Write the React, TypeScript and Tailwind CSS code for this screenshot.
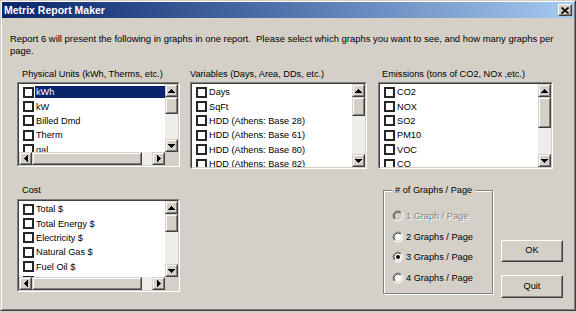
import React from "react";

const FONT = "font-['Liberation_Sans',Arial,sans-serif]";

function Raised({
  className = "",
  push = false,
  children,
}: {
  className?: string;
  push?: boolean;
  children?: React.ReactNode;
}) {
  const outer = push
    ? "border-t-white border-l-white border-r-[#404040] border-b-[#404040]"
    : "border-t-[#d4d0c8] border-l-[#d4d0c8] border-r-[#404040] border-b-[#404040]";
  const inner = push
    ? "border-t-[#d4d0c8] border-l-[#d4d0c8] border-r-[#808080] border-b-[#808080]"
    : "border-t-white border-l-white border-r-[#808080] border-b-[#808080]";
  return (
    <div className={`shrink-0 border ${outer} ${className}`}>
      <div className={`flex h-full w-full items-center justify-center border bg-[#d4d0c8] ${inner}`}>
        {children}
      </div>
    </div>
  );
}

const ARROWS: Record<string, { w: number; h: number; d: string }> = {
  up: { w: 7, h: 4, d: "M3 0h1v1h1v1h1v1h1v1H0V3h1V2h1V1h1z" },
  down: { w: 7, h: 4, d: "M0 0h7v1h-1v1h-1v1h-1v1H3V3H2V2H1V1H0z" },
  left: { w: 4, h: 7, d: "M0 3h1V2h1V1h1V0h1v7H3V6H2V5H1V4H0z" },
  right: { w: 4, h: 7, d: "M0 0h1v1h1v1h1v1h1v1H3v1H2v1H1v1H0z" },
};

function Arrow({ dir }: { dir: "up" | "down" | "left" | "right" }) {
  const a = ARROWS[dir];
  return (
    <svg width={a.w} height={a.h} viewBox={`0 0 ${a.w} ${a.h}`} shapeRendering="crispEdges">
      <path d={a.d} fill="#000" />
    </svg>
  );
}

function VScroll({ thumb }: { thumb: string }) {
  return (
    <div className="flex w-[13px] shrink-0 flex-col bg-[#eeede9]">
      <Raised className="h-[13px] w-[13px]">
        <Arrow dir="up" />
      </Raised>
      <Raised className={`w-[13px] ${thumb}`} />
      <div className="flex-1" />
      <Raised className="h-[13px] w-[13px]">
        <Arrow dir="down" />
      </Raised>
    </div>
  );
}

function HScroll({ thumb }: { thumb: string }) {
  return (
    <div className="flex h-[13px] flex-1 bg-[#eeede9]">
      <Raised className="h-[13px] w-[13px]">
        <Arrow dir="left" />
      </Raised>
      <Raised className={`h-[13px] ${thumb}`} />
      <div className="flex-1" />
      <Raised className="h-[13px] w-[13px]">
        <Arrow dir="right" />
      </Raised>
    </div>
  );
}

function ListBox({
  items,
  selected = -1,
  size,
  vThumb,
  hThumb,
}: {
  items: string[];
  selected?: number;
  size: string;
  vThumb: string;
  hThumb?: string;
}) {
  return (
    <div className={`border border-t-[#808080] border-l-[#808080] border-r-white border-b-white ${size}`}>
      <div className="flex h-full w-full flex-col border border-t-[#404040] border-l-[#404040] border-r-[#d4d0c8] border-b-[#d4d0c8] bg-white">
        <div className="flex min-h-0 flex-1">
          <div className="min-w-0 flex-1 overflow-hidden pt-[1px]">
            {items.map((t, i) => (
              <div key={t} className="flex h-[14.4px] items-center pl-[4px]">
                <span className="h-[11px] w-[11px] shrink-0 border-2 border-[#262626] bg-white" />
                <span
                  className={`ml-[1px] h-[12px] flex-1 whitespace-nowrap pl-[1px] leading-[12px] ${
                    i === selected ? "bg-[#0a246a] text-white" : "text-black"
                  }`}
                >
                  {t}
                </span>
              </div>
            ))}
          </div>
          <VScroll thumb={vThumb} />
        </div>
        {hThumb && (
          <div className="flex">
            <HScroll thumb={hThumb} />
            <div className="h-[13px] w-[13px] bg-[#d4d0c8]" />
          </div>
        )}
      </div>
    </div>
  );
}

function Radio({ checked = false, disabled = false }: { checked?: boolean; disabled?: boolean }) {
  return (
    <svg width="12" height="12" viewBox="0 0 12 12" className="shrink-0">
      <circle cx="6" cy="6" r="5" fill={disabled ? "#d4d0c8" : "#fff"} />
      <path d="M2.46 9.54 A5 5 0 0 1 9.54 2.46" fill="none" stroke="#808080" />
      <path d="M9.54 2.46 A5 5 0 0 1 2.46 9.54" fill="none" stroke="#fff" />
      <path d="M3.17 8.83 A4 4 0 0 1 8.83 3.17" fill="none" stroke="#404040" />
      <path d="M8.83 3.17 A4 4 0 0 1 3.17 8.83" fill="none" stroke="#d4d0c8" />
      {checked && <circle cx="6" cy="6" r="2" fill="#000" />}
    </svg>
  );
}

const radios = [
  { label: "1 Graph / Page", disabled: true },
  { label: "2 Graphs / Page" },
  { label: "3 Graphs / Page", checked: true },
  { label: "4 Graphs / Page" },
];

export default function App() {
  return (
    <div className={`h-[313px] w-[576px] bg-[#d4d0c8] text-[9.2px] text-black ${FONT}`}>
      <div className="h-[311px] border border-t-[#d4d0c8] border-l-[#d4d0c8] border-r-[#404040] border-b-[#404040]">
        <div className="flex h-full flex-col border border-t-white border-l-white border-r-[#808080] border-b-[#808080]">
          {/* title bar */}
          <div className="flex h-[16px] shrink-0 items-center bg-linear-to-r from-[#0a246a] to-[#a6caf0] pl-[2px] pr-[2px]">
            <span className="flex-1 text-[10.5px] font-bold leading-none text-white">Metrix Report Maker</span>
            <Raised push className="h-[12px] w-[14px]">
              <svg width="8" height="7" viewBox="0 0 8 7">
                <path d="M0.5 0.5 L7.5 6.5 M7.5 0.5 L0.5 6.5" stroke="#000" strokeWidth="1.6" />
              </svg>
            </Raised>
          </div>

          {/* body */}
          <div className="flex-1 pt-[15px]">
            <p className="whitespace-nowrap pl-[8px] text-[9.45px] leading-[12px]">
              Report 6 will present the following in graphs in one report.{"\u00a0 "}Please select which graphs you want to see, and how many graphs per
              <br />
              page.
            </p>

            <div className="mt-[11px] flex items-start">
              <div className="ml-[15px] w-[163px]">
                <div className="mb-[2px] pl-[5px] leading-[12px]">Physical Units (kWh, Therms, etc.)</div>
                <ListBox
                  items={["kWh", "kW", "Billed Dmd", "Therm", "gal"]}
                  selected={0}
                  size="h-[85px] w-[163px]"
                  vThumb="h-[17px]"
                  hThumb="w-[110px]"
                />
              </div>
              <div className="ml-[10px] w-[177px]">
                <div className="mb-[2px] leading-[12px]">Variables (Days, Area, DDs, etc.)</div>
                <ListBox
                  items={[
                    "Days",
                    "SqFt",
                    "HDD (Athens: Base 28)",
                    "HDD (Athens: Base 61)",
                    "HDD (Athens: Base 80)",
                    "HDD (Athens: Base 82)",
                  ]}
                  size="h-[87px] w-[177px]"
                  vThumb="h-[19px]"
                />
              </div>
              <div className="ml-[11px] w-[175px]">
                <div className="mb-[2px] pl-[4px] leading-[12px]">Emissions (tons of CO2, NOx ,etc.)</div>
                <ListBox
                  items={["CO2", "NOX", "SO2", "PM10", "VOC", "CO"]}
                  size="h-[87px] w-[175px]"
                  vThumb="h-[31px]"
                />
              </div>
            </div>

            <div className="mt-[15px] flex items-start">
              <div className="ml-[15px] w-[163px]">
                <div className="mb-[3px] pl-[5px] leading-[12px]">Cost</div>
                <ListBox
                  items={["Total $", "Total Energy $", "Electricity $", "Natural Gas $", "Fuel Oil $", "Propane $"]}
                  size="h-[93px] w-[163px]"
                  vThumb="h-[18px]"
                  hThumb="w-[110px]"
                />
              </div>

              <div className="relative ml-[203px] mt-[6px] h-[104px] w-[110px] border border-[#808080] pl-[8px] pt-[15px] shadow-[inset_1px_1px_0_#fff,1px_1px_0_#fff]">
                <span className="absolute -top-[7px] left-[8px] bg-[#d4d0c8] px-[3px] leading-[12px]">
                  # of Graphs / Page
                </span>
                {radios.map((r) => (
                  <div key={r.label} className="flex h-[20.5px] items-center">
                    <Radio checked={r.checked} disabled={r.disabled} />
                    <span
                      className={`ml-[2px] whitespace-nowrap leading-[12px] ${
                        r.disabled ? "text-[#808080] [text-shadow:1px_1px_0_#fff]" : ""
                      }`}
                    >
                      {r.label}
                    </span>
                  </div>
                ))}
              </div>

              <div className="ml-[8px] mt-[56px] flex flex-col gap-[13px]">
                <Raised push className="h-[22px] w-[62px]">
                  <span className="leading-none">OK</span>
                </Raised>
                <Raised push className="h-[23px] w-[62px]">
                  <span className="leading-none">Quit</span>
                </Raised>
              </div>
            </div>
          </div>
        </div>
      </div>
    </div>
  );
}
